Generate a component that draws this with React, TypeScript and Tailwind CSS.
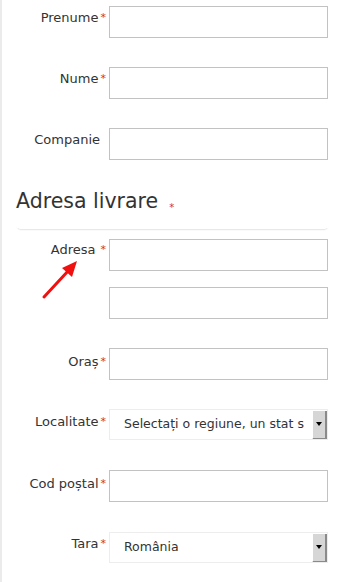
import React from "react";

const font = { fontFamily: '"DejaVu Sans", "Open Sans", sans-serif' };

function Star({ small = false, gap = "ml-[2px]" }: { small?: boolean; gap?: string }) {
  return (
    <span className={small ? "text-[#e02b27] text-[10px] leading-none" : `text-[#e02b27] text-[11px] leading-none ${gap} mt-[3px]`}>*</span>
  );
}

function Label({ text, star = true, offset = "mt-[9px]", gap = "ml-[2px]" }: { text: string; star?: boolean; offset?: string; gap?: string }) {
  return (
    <div className={`w-[105px] shrink-0 flex justify-end items-start pr-[3px] ${offset}`}>
      <span className="text-[13px] leading-[17px] text-[#333]">{text}</span>
      {star ? <Star gap={gap} /> : <span className="w-[6px]" />}
    </div>
  );
}

function Input() {
  return <div className="w-[219px] h-[32px] border border-[#c2c2c2] bg-white" />;
}

function Select({ text }: { text: string }) {
  return (
    <div className="w-[219px] h-[31px] border border-[#ededed] bg-white flex items-center relative overflow-hidden">
      <span className="pl-[14px] pr-[18px] text-[12.5px] text-[#333] whitespace-nowrap overflow-hidden flex-1">{text}</span>
      <div className="absolute right-0 top-[1px] w-[15px] h-[29px] bg-[#d6d6d6] border-r-2 border-b-2 border-[#8a8a8a] border-l border-l-white flex justify-center pt-[11px]">
        <div className="w-0 h-0 border-l-[3px] border-r-[3px] border-t-[4px] border-l-transparent border-r-transparent border-t-black" />
      </div>
    </div>
  );
}

export default function App() {
  return (
    <div className="w-[340px] h-[582px] bg-white border-l-2 border-[#ebebeb] relative overflow-hidden" style={font}>
      <div className="pt-[6px] pl-[2px]">
        <div className="flex h-[32px] mb-[29px]">
          <Label text="Prenume" offset="mt-[3px]" />
          <Input />
        </div>
        <div className="flex h-[32px] mb-[29px]">
          <Label text="Nume" offset="mt-[3px]" />
          <Input />
        </div>
        <div className="flex h-[32px]">
          <Label text="Companie" star={false} offset="mt-[3px]" />
          <Input />
        </div>
        <div className="ml-[12px] w-[313px] mt-[26px]">
          <div className="flex items-end h-[30px]">
            <span className="text-[20.5px] leading-[30px] text-[#333]">Adresa livrare</span>
            <span className="ml-[11px] mb-[-2px]"><Star small /></span>
          </div>
          <div className="h-[14px] border-b border-x border-[#e8e8e8] rounded-b-[5px] border-x-transparent shadow-[0_1px_0_rgba(0,0,0,0.02)]" />
        </div>
        <div className="flex h-[32px] mt-[9px]">
          <Label text="Adresa" offset="mt-[2px]" gap="ml-[5px]" />
          <Input />
        </div>
        <div className="flex h-[32px] mt-[16px] mb-[29px]">
          <div className="w-[105px] shrink-0" />
          <Input />
        </div>
        <div className="flex h-[32px] mb-[29px]">
          <Label text="Oraș" offset="mt-[5px]" />
          <Input />
        </div>
        <div className="flex h-[31px] mb-[30px]">
          <Label text="Localitate" offset="mt-[4px]" />
          <Select text="Selectați o regiune, un stat s" />
        </div>
        <div className="flex h-[32px] mb-[30px]">
          <Label text="Cod poștal" offset="mt-[5px]" />
          <Input />
        </div>
        <div className="flex h-[31px]">
          <Label text="Tara" offset="mt-[3px]" />
          <Select text="România" />
        </div>
      </div>
      <svg className="absolute left-[38px] top-[257px]" width="42" height="44" viewBox="0 0 42 44">
        <line x1="4" y1="40" x2="29" y2="13" stroke="#f01010" strokeWidth="3" strokeLinecap="round" />
        <polygon points="37,4 22,11 32,20" fill="#f01010" />
      </svg>
    </div>
  );
}
